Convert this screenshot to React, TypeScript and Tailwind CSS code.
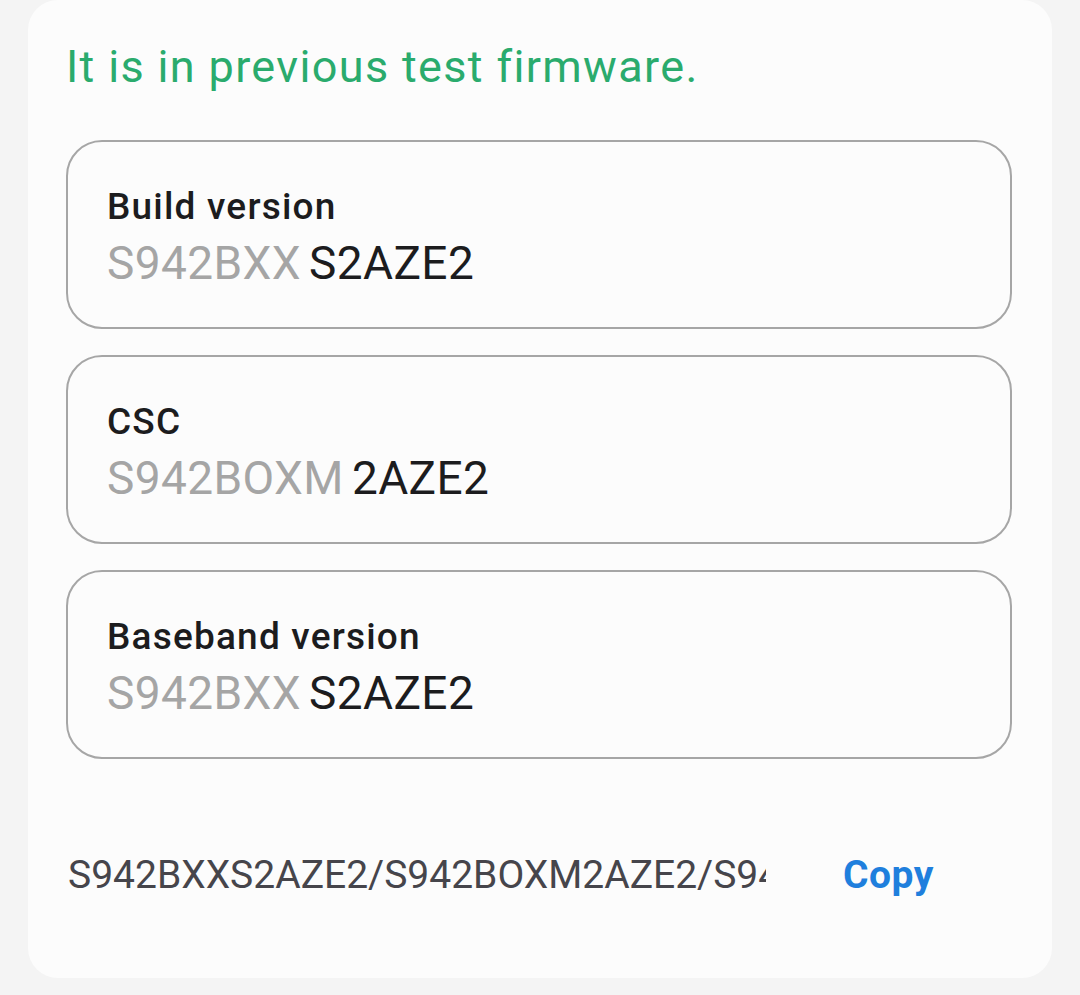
const ROWS = [
  { label: "Build version", dim: "S942BXX", value: "S2AZE2" },
  { label: "CSC", dim: "S942BOXM", value: "2AZE2" },
  { label: "Baseband version", dim: "S942BXX", value: "S2AZE2" },
];

export default function App() {
  return (
    <div
      className="min-h-[995px] bg-[#f4f4f4] px-[28px]"
      style={{ fontFamily: "Roboto, 'Noto Sans', sans-serif" }}
    >
      <div className="rounded-[30px] bg-[#fcfcfc] pl-[38px] pr-[40px] pt-[40px] pb-[80px]">
        <p className="text-[45px] leading-[54px] tracking-[1.35px] text-[#2aab6d]">
          It is in previous test firmware.
        </p>

        <div className="mt-[46px] flex flex-col gap-[26px]">
          {ROWS.map((r) => (
            <div
              key={r.label}
              className="rounded-[36px] border-2 border-[#a6a6a6] pl-[39px] pr-8 pt-[43px] pb-[37px]"
            >
              <p className="text-[37px] font-medium leading-[44px] tracking-[1.2px] text-[#1c1c1e]">
                {r.label}
              </p>
              <p className="mt-[7px] text-[46px] leading-[54px] tracking-[0.4px]">
                <span className="text-[#a5a5a5]">{r.dim}</span>
                <span className="ml-[8px] text-[#1c1c1e]">{r.value}</span>
              </p>
            </div>
          ))}
        </div>

        <div className="mt-[93px] flex items-center">
          <div className="w-[700px] overflow-hidden whitespace-nowrap pl-[2px] text-[39px] leading-[46px] text-[#46454b]">
            S942BXXS2AZE2/S942BOXM2AZE2/S942BXXS2AZE2
          </div>
          <button className="ml-[77px] text-[39px] font-bold leading-[46px] tracking-[0.5px] text-[#1f7fdd]">
            Copy
          </button>
        </div>
      </div>
    </div>
  );
}
